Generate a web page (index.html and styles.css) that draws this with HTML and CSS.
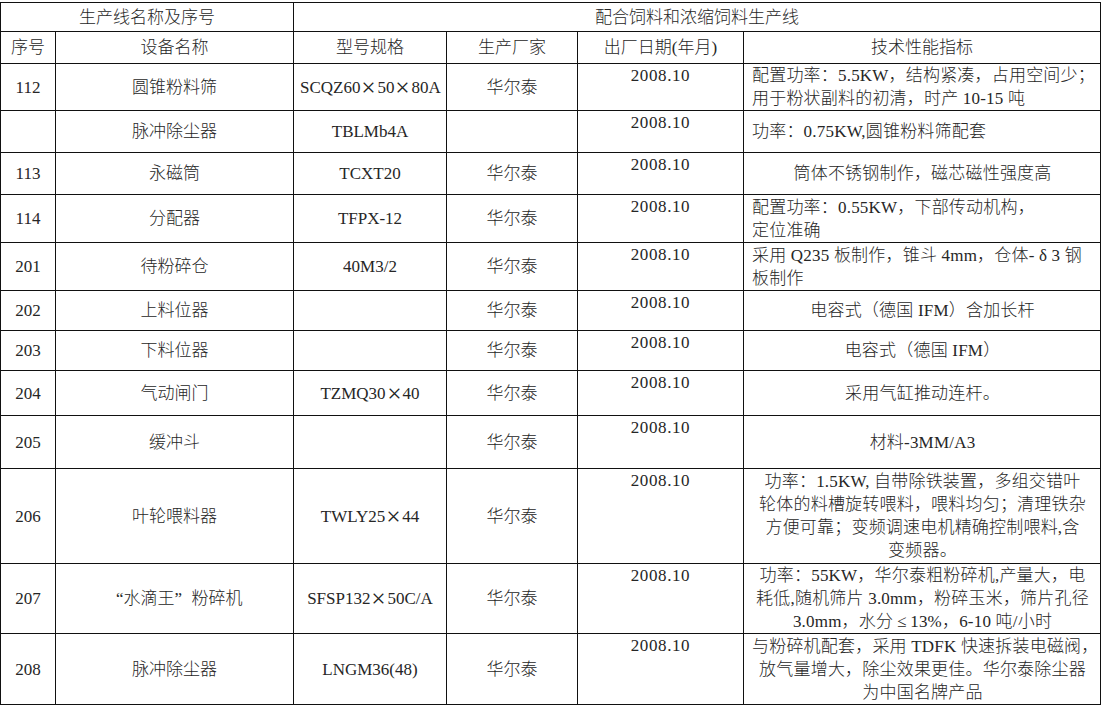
FILE: index.html
```html
<!DOCTYPE html>
<html lang="zh-CN">
<head>
<meta charset="utf-8">
<title>配合饲料和浓缩饲料生产线</title>
<link rel="stylesheet" href="styles.css">
</head>
<body>
<table class="sheet">
  <colgroup>
    <col class="c-no">
    <col class="c-name">
    <col class="c-model">
    <col class="c-maker">
    <col class="c-date">
    <col class="c-spec">
  </colgroup>
  <tbody>
    <tr class="h-29">
      <td colspan="2">生产线名称及序号</td>
      <td colspan="4">配合饲料和浓缩饲料生产线</td>
    </tr>
    <tr class="h-32">
      <td>序号</td>
      <td>设备名称</td>
      <td>型号规格</td>
      <td>生产厂家</td>
      <td>出厂日期(年月)</td>
      <td>技术性能指标</td>
    </tr>
    <tr class="h-46">
      <td>112</td>
      <td>圆锥粉料筛</td>
      <td>SCQZ60<span class="fw x">×</span>50<span class="fw x">×</span>80A</td>
      <td>华尔泰</td>
      <td class="date">2008.10</td>
      <td class="spec left">配置功率：5.5KW，结构紧凑，占用空间少；<br>用于粉状副料的初清，时产 10-15 吨</td>
    </tr>
    <tr class="h-42">
      <td></td>
      <td>脉冲除尘器</td>
      <td>TBLMb4A</td>
      <td></td>
      <td class="date">2008.10</td>
      <td class="spec left">功率：0.75KW,圆锥粉料筛配套</td>
    </tr>
    <tr class="h-42">
      <td>113</td>
      <td>永磁筒</td>
      <td>TCXT20</td>
      <td>华尔泰</td>
      <td class="date">2008.10</td>
      <td class="spec">筒体不锈钢制作，磁芯磁性强度高</td>
    </tr>
    <tr class="h-48">
      <td>114</td>
      <td>分配器</td>
      <td>TFPX-12</td>
      <td>华尔泰</td>
      <td class="date">2008.10</td>
      <td class="spec left">配置功率：0.55KW，下部传动机构，<br>定位准确</td>
    </tr>
    <tr class="h-48">
      <td>201</td>
      <td>待粉碎仓</td>
      <td>40M3/2</td>
      <td>华尔泰</td>
      <td class="date">2008.10</td>
      <td class="spec left">采用 Q235 板制作，锥斗 4mm，仓体-<span class="fw">δ</span>3 钢<br>板制作</td>
    </tr>
    <tr class="h-40">
      <td>202</td>
      <td>上料位器</td>
      <td></td>
      <td>华尔泰</td>
      <td class="date">2008.10</td>
      <td class="spec">电容式（德国 IFM）含加长杆</td>
    </tr>
    <tr class="h-40">
      <td>203</td>
      <td>下料位器</td>
      <td></td>
      <td>华尔泰</td>
      <td class="date">2008.10</td>
      <td class="spec">电容式（德国 IFM）</td>
    </tr>
    <tr class="h-45">
      <td>204</td>
      <td>气动闸门</td>
      <td>TZMQ30<span class="fw x">×</span>40</td>
      <td>华尔泰</td>
      <td class="date">2008.10</td>
      <td class="spec">采用气缸推动连杆。</td>
    </tr>
    <tr class="h-53">
      <td>205</td>
      <td>缓冲斗</td>
      <td></td>
      <td>华尔泰</td>
      <td class="date">2008.10</td>
      <td class="spec">材料-3MM/A3</td>
    </tr>
    <tr class="h-95">
      <td>206</td>
      <td>叶轮喂料器</td>
      <td>TWLY25<span class="fw x">×</span>44</td>
      <td>华尔泰</td>
      <td class="date">2008.10</td>
      <td class="spec">功率：1.5KW, 自带除铁装置，多组交错叶<br>轮体的料槽旋转喂料，喂料均匀；清理铁杂<br>方便可靠；变频调速电机精确控制喂料,含<br>变频器。</td>
    </tr>
    <tr class="h-70">
      <td>207</td>
      <td><span class="fw lq">“</span>水滴王<span class="fw rq">”</span>粉碎机</td>
      <td>SFSP132<span class="fw x">×</span>50C/A</td>
      <td>华尔泰</td>
      <td class="date">2008.10</td>
      <td class="spec">功率：55KW，华尔泰粗粉碎机,产量大，电<br>耗低,随机筛片 3.0mm，粉碎玉米，筛片孔径<br>3.0mm，水分<span class="fw">≤</span>13%，6-10 吨/小时</td>
    </tr>
    <tr class="h-71">
      <td>208</td>
      <td>脉冲除尘器</td>
      <td>LNGM36(48)</td>
      <td>华尔泰</td>
      <td class="date">2008.10</td>
      <td class="spec">与粉碎机配套，采用 TDFK 快速拆装电磁阀，<br>放气量增大，除尘效果更佳。华尔泰除尘器<br>为中国名牌产品</td>
    </tr>
  </tbody>
</table>
</body>
</html>
```

FILE: styles.css
```css
html, body {
  margin: 0;
  padding: 0;
  background: #ffffff;
}

body {
  padding-top: 2px;
  font-family: "Liberation Serif", "Noto Sans CJK SC", serif;
  font-size: 17px;
  font-weight: 300;
  color: #262626;
}

.sheet {
  border-collapse: collapse;
  table-layout: fixed;
  width: 1100px;
}

.c-no { width: 55px; }
.c-name { width: 238px; }
.c-model { width: 153px; }
.c-maker { width: 131px; }
.c-date { width: 166px; }
.c-spec { width: 357px; }

.sheet td {
  border: 1px solid #111111;
  padding: 0 6px;
  text-align: center;
  vertical-align: middle;
  line-height: 23px;
  white-space: nowrap;
  overflow: hidden;
}

.sheet td.date {
  vertical-align: top;
  padding-top: 0;
  letter-spacing: 0.6px;
}

.sheet td.spec {
  padding: 0 7px 0 8px;
  letter-spacing: 0.2px;
}

.sheet td.left {
  text-align: left;
}

.fw {
  display: inline-block;
  width: 1em;
  text-align: center;
}

.fw.x {
  transform: scale(1.5);
}

.fw.lq { text-align: right; }
.fw.rq { text-align: left; }

.h-29 { height: 29px; }
.h-32 { height: 32px; }
.h-40 { height: 40px; }
.h-42 { height: 42px; }
.h-45 { height: 45px; }
.h-46 { height: 46px; }
.h-48 { height: 48px; }
.h-53 { height: 53px; }
.h-70 { height: 70px; }
.h-71 { height: 71px; }
.h-95 { height: 95px; }
```
